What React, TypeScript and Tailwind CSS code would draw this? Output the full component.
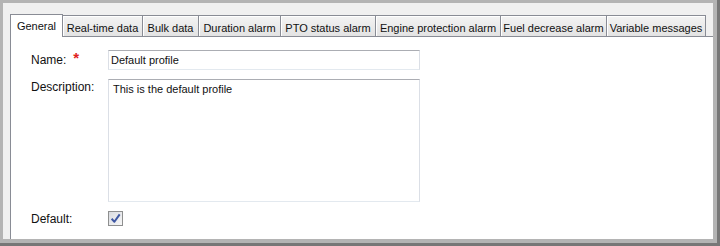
import React from "react";

const TABS: { label: string; w: number }[] = [
  { label: "General", w: 53 },
  { label: "Real-time data", w: 80 },
  { label: "Bulk data", w: 56 },
  { label: "Duration alarm", w: 82 },
  { label: "PTO status alarm", w: 95 },
  { label: "Engine protection alarm", w: 125 },
  { label: "Fuel decrease alarm", w: 106 },
  { label: "Variable messages", w: 99 },
];

function Check() {
  return (
    <div className="w-[15px] h-[15px] border border-[#8e8f8f] bg-gradient-to-br from-[#d9dbe0] to-[#f7f7f7] flex items-center justify-center">
      <svg width="11" height="11" viewBox="0 0 10 10">
        <path d="M1.5 5.2 L4 8 L8.8 1.2" fill="none" stroke="#3f58a3" strokeWidth="1.8" strokeLinejoin="round" />
      </svg>
    </div>
  );
}

export default function App() {
  return (
    <div className="w-[720px] h-[246px] border-r-[3px] border-b-[3px] border-[#777777]" style={{ fontFamily: '"Liberation Sans", Arial, sans-serif' }}>
      <div className="h-full border-t-[3px] border-l-[3px] border-r-[4px] border-b-[4px] border-[#b4b4b4] bg-[#f0f0f0] pl-[7px] pt-[11px] flex flex-col text-[11px] text-[#111]">
        <div className="flex items-end h-[22px] relative z-10">
          {TABS.map((t, i) =>
            i === 0 ? (
              <div key={t.label} style={{ width: t.w }} className="h-[23px] -mb-px bg-white border border-b-0 border-[#898c95] flex justify-center pt-[3px] shrink-0">
                {t.label}
              </div>
            ) : (
              <div key={t.label} style={{ width: t.w }} className="h-[21px] border-t border-r border-[#898c95] bg-gradient-to-b from-[#f3f3f3] to-[#e3e3e3] shadow-[inset_1px_1px_0_#ffffff] flex justify-center pt-[4px] shrink-0">
                {t.label}
              </div>
            )
          )}
        </div>
        <div className="flex-1 bg-white border-l border-t border-[#898c95] pl-[20px] pt-[13px]">
          <div className="grid grid-cols-[77px_312px] gap-y-[9px]">
            <div className="h-[20px] flex items-center text-[12px]">
              Name:<span className="text-[#e02020] ml-[7px] text-[15px] -mt-[3px] font-bold">*</span>
            </div>
            <div className="h-[20px] border border-[#dbdfe6] border-t-[#abadb3] border-b-[#e3e9ef] flex items-center pl-[2px]">
              Default profile
            </div>
            <div className="pt-[1px] leading-[14px] text-[12px]">Description:</div>
            <div className="h-[123px] border border-[#dbdfe6] border-t-[#abadb3] border-b-[#e3e9ef] pl-[4px] pt-[2px] leading-[14px]">
              This is the default profile
            </div>
            <div className="h-[15px] flex items-center text-[12px]">Default:</div>
            <div>
              <Check />
            </div>
          </div>
        </div>
      </div>
    </div>
  );
}
